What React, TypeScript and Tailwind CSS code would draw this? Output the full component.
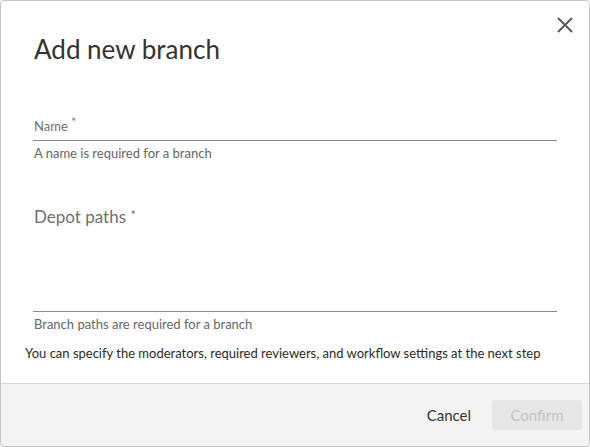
import * as React from "react";

export default function App() {
  return (
    <div
      className="w-[590px] h-[447px] bg-white"
      style={{ fontFamily: "Lato, 'Open Sans', sans-serif" }}
    >
      <div className="flex h-full flex-col rounded-[4px] border border-[#c4c4c4] bg-white">
        <div className="relative flex-1 px-[32px]">
          <button
            type="button"
            aria-label="Close"
            className="absolute right-[15px] top-[15px] text-[#555]"
          >
            <svg width="18" height="18" viewBox="0 0 18 18" fill="none">
              <path
                d="M2 2L16 16M16 2L2 16"
                stroke="currentColor"
                strokeWidth="1.8"
              />
            </svg>
          </button>
          <h2 className="mt-[32px] pl-px text-[26px] leading-[32px] text-[#333]">
            Add new branch
          </h2>

          <div className="mt-[53px]">
            <label className="block pl-px text-[13px] leading-[16px] text-[#707070]">
              Name <span className="relative -top-[4px] text-[#888]">*</span>
            </label>
            <div className="mt-[6px] h-px w-[524px] bg-[#8a8a8a]" />
            <p className="mt-[4px] pl-px text-[13px] leading-[16px] text-[#666]">
              A name is required for a branch
            </p>
          </div>

          <div className="mt-[46px]">
            <label className="block pl-px text-[17px] leading-[20px] text-[#707070]">
              Depot paths <span className="relative -top-[3px] text-[13px] text-[#777]">*</span>
            </label>
            <div className="mt-[83px] h-px w-[524px] bg-[#8a8a8a]" />
            <p className="mt-[4px] pl-px text-[13px] leading-[16px] text-[#666]">
              Branch paths are required for a branch
            </p>
          </div>

          <p className="-ml-[8px] mt-[13px] text-[13px] leading-[16px] text-[#2a2a2a]">
            You can specify the moderators, required reviewers, and workflow settings at the next step
          </p>
        </div>

        <div className="flex h-[63px] items-center justify-end gap-[21px] rounded-b-[4px] border-t border-[#d8d8d8] bg-[#f3f3f3] pr-[7px]">
          <button type="button" className="text-[15px] text-[#333]">
            Cancel
          </button>
          <button
            type="button"
            disabled
            className="h-[30px] w-[90px] rounded-[3px] bg-[#e6e6e6] text-[15px] text-[#c2c2c2]"
          >
            Confirm
          </button>
        </div>
      </div>
    </div>
  );
}
